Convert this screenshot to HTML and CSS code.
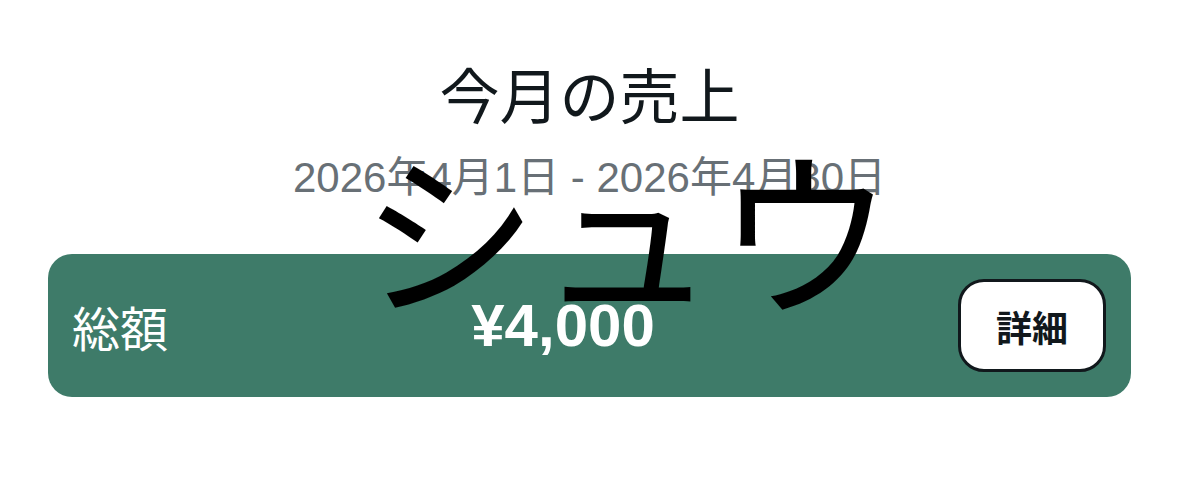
FILE: index.html
```html
<!DOCTYPE html>
<html lang="ja">
<head>
<meta charset="utf-8">
<title>今月の売上</title>
<link rel="stylesheet" href="styles.css">
</head>
<body>
<main class="screen">
  <header class="head">
    <h1 class="title">今月の売上</h1>
    <p class="range">2026年4月1日 - 2026年4月30日</p>
  </header>
  <section class="card">
    <span class="label">総額</span>
    <span class="amount">¥4,000</span>
    <button class="detail" type="button">詳細</button>
  </section>
</main>
<div class="overlay">シュウ</div>
</body>
</html>
```

FILE: styles.css
```css
html, body {
  margin: 0;
  padding: 0;
  background: #ffffff;
}

body {
  width: 1179px;
  height: 493px;
  overflow: hidden;
  position: relative;
  font-family: "Liberation Sans", "Noto Sans CJK JP", sans-serif;
}

.screen {
  display: flex;
  flex-direction: column;
  padding: 57px 48px 0;
}

.head {
  display: flex;
  flex-direction: column;
  align-items: center;
}

.title {
  margin: 0;
  font-family: "Noto Sans CJK JP", sans-serif;
  font-weight: 400;
  font-size: 60px;
  line-height: 72px;
  color: #11181c;
}

.range {
  margin: 24px 0 0;
  font-size: 42px;
  line-height: 50px;
  color: #687076;
}

.card {
  margin-top: 51px;
  display: flex;
  align-items: center;
  justify-content: space-between;
  padding: 25px 25px 25px 24px;
  background: #3e7b69;
  border-radius: 24px;
}

.label {
  font-family: "Noto Sans CJK JP", sans-serif;
  font-size: 48px;
  line-height: 56px;
  color: #ffffff;
}

.amount {
  font-weight: 700;
  font-size: 60px;
  line-height: 64px;
  color: #ffffff;
}

.detail {
  box-sizing: border-box;
  width: 148px;
  height: 93px;
  padding: 0;
  background: #ffffff;
  border: 3px solid #11181c;
  border-radius: 26px;
  font-family: "Noto Sans CJK JP", sans-serif;
  font-weight: 700;
  font-size: 36px;
  color: #11181c;
}

.overlay {
  position: absolute;
  left: 360px;
  top: 137px;
  font-family: "Noto Sans CJK JP", sans-serif;
  font-size: 178px;
  line-height: 1;
  color: #000000;
  white-space: nowrap;
}
```
